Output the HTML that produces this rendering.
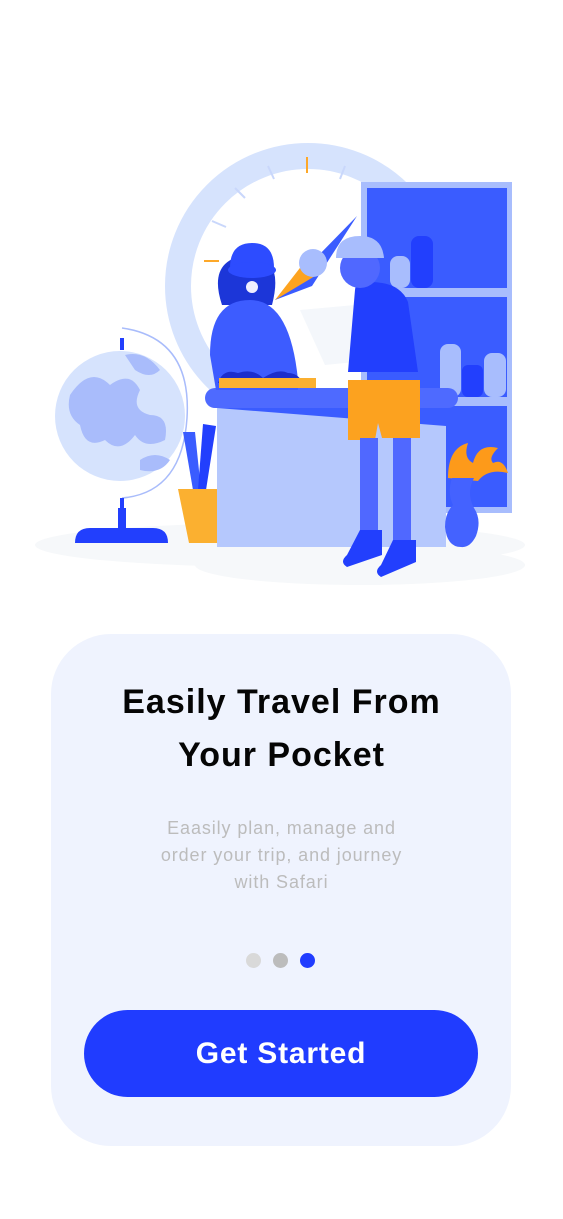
<!DOCTYPE html>
<html><head><meta charset="utf-8"><style>
html,body{margin:0;padding:0;background:#fff;}
body{width:563px;height:1219px;position:relative;overflow:hidden;font-family:"Liberation Sans",sans-serif;}
.card{position:absolute;left:51px;top:634px;width:460px;height:512px;background:#eff3fe;border-radius:60px;}
.t{position:absolute;left:0;width:563px;text-align:center;font-weight:bold;font-size:34px;color:#050505;letter-spacing:1px;}
.s{position:absolute;left:0;width:563px;text-align:center;font-size:18px;color:#bcbcbc;line-height:27px;top:815px;letter-spacing:0.9px;}
.dot{position:absolute;top:953px;width:15px;height:15px;border-radius:50%;}
.btn{position:absolute;left:84px;top:1010px;width:394px;height:87px;border-radius:44px;background:#203cff;color:#fff;font-weight:bold;font-size:30px;text-align:center;line-height:87px;letter-spacing:0.8px;}
</style></head><body>
<svg width="563" height="600" style="position:absolute;left:0;top:0">
<ellipse cx="280" cy="545" rx="245" ry="22" fill="#f6f8fa"/>
<ellipse cx="360" cy="565" rx="165" ry="20" fill="#f6f8fa"/>
<circle cx="308" cy="286" r="130" fill="none" stroke="#d6e3fd" stroke-width="26"/>
<line x1="307" y1="157" x2="307" y2="173" stroke="#fda829" stroke-width="2"/>
<line x1="268" y1="166" x2="274" y2="179" stroke="#c9d7fb" stroke-width="2"/>
<line x1="345" y1="166" x2="340" y2="179" stroke="#c9d7fb" stroke-width="2"/>
<line x1="235" y1="188" x2="245" y2="198" stroke="#c9d7fb" stroke-width="2"/>
<line x1="212" y1="221" x2="226" y2="227" stroke="#c9d7fb" stroke-width="2"/>
<line x1="204" y1="261" x2="219" y2="261" stroke="#fda829" stroke-width="2"/>
<rect x="361" y="182" width="151" height="331" fill="#a8bdfd"/>
<rect x="367" y="188" width="140" height="100" fill="#3a5cff"/>
<rect x="367" y="297" width="140" height="100" fill="#3a5cff"/>
<rect x="367" y="406" width="140" height="101" fill="#3a5cff"/>
<rect x="411" y="236" width="22" height="52" rx="8" fill="#223ffd"/>
<rect x="390" y="256" width="20" height="32" rx="8" fill="#a8bdfd"/>
<rect x="440" y="344" width="21" height="53" rx="8" fill="#a8bdfd"/>
<rect x="484" y="353" width="22" height="44" rx="8" fill="#a8bdfd"/>
<rect x="462" y="365" width="21" height="32" rx="6" fill="#223ffd"/>
<circle cx="120" cy="416" r="65" fill="#d6e3fd"/>
<path d="M70 395 q20 -30 40 -10 q20 -15 30 5 q-10 20 10 25 q20 0 15 25 q-20 10 -30 -5 q-15 20 -30 5 q-20 10 -25 -15 q-15 -10 -10 -30z" fill="#a9bcfb"/>
<path d="M125 355 q20 -5 35 15 q-10 10 -25 0z M140 460 q15 -10 30 0 q-10 15 -30 10z" fill="#a9bcfb"/>
<path d="M122 328 q70 10 65 90 q-5 75 -65 80" fill="none" stroke="#a9bcfb" stroke-width="1.5"/>
<rect x="120" y="338" width="4" height="12" fill="#223ffd"/>
<rect x="120" y="498" width="4" height="12" fill="#223ffd"/>
<rect x="118" y="508" width="8" height="22" fill="#223ffd"/>
<path d="M75 543 q0 -15 15 -15 h63 q15 0 15 15z" fill="#223ffd"/>
<path d="M183 432 l10 58 h8 l-6 -58z" fill="#3a5cff"/>
<path d="M203 424 l-5 66 h8 l10 -64z" fill="#223ffd"/>
<path d="M178 489 h39 v54 h-28z" fill="#fbb030"/>
<rect x="217" y="400" width="229" height="147" fill="#b5c8fd"/>
<rect x="205" y="388" width="253" height="20" rx="10" fill="#4e6aff"/>
<path d="M217 408 h229 v18z" fill="#3a5cff"/>
<path d="M275 300 l82 -84 l-45 70z" fill="#3a5cff"/>
<path d="M275 300 l35 -45 l10 18z" fill="#fda31f"/>
<circle cx="313" cy="263" r="14" fill="#a8bdfd"/>
<path d="M222 305 q-15 -45 25 -50 q38 0 25 50z" fill="#1c36d8"/>
<path d="M230 268 q0 -25 22 -25 q22 0 22 25z" fill="#2d4cff"/>
<ellipse cx="252" cy="270" rx="24" ry="8" fill="#2d4cff"/>
<path d="M210 355 q0 -55 40 -55 q40 0 48 80 v10 h-82z" fill="#3d5cff"/>
<circle cx="252" cy="287" r="6" fill="#eef" />
<path d="M218 383 q5 -15 20 -10 q15 -5 25 5 q15 -10 25 -5 q10 0 15 10z" fill="#1c2ecc"/>
<rect x="219" y="378" width="97" height="10" fill="#fbb030"/>
<path d="M300 310 l55 -5 l20 55 l-50 5z" fill="#f4f7fb"/>
<path d="M355 290 q0 -8 15 -8 q30 0 38 20 l10 70 h-70z" fill="#223ffd"/>
<circle cx="360" cy="268" r="20" fill="#5068ff"/>
<path d="M336 258 q0 -22 24 -22 q22 0 24 22z" fill="#a8bdfd"/>
<path d="M348 380 h72 l0 58 h-38 l-4 -15 l-3 17 h-27z" fill="#fca21f"/>
<rect x="360" y="438" width="18" height="95" fill="#5068ff"/>
<rect x="393" y="438" width="18" height="105" fill="#5068ff"/>
<path d="M360 530 h22 v25 l-35 12 q-8 -5 0 -12z" fill="#223ffd"/>
<path d="M393 540 h23 v22 l-35 15 q-8 -5 0 -12z" fill="#223ffd"/>
<path d="M448 478 q0 -30 20 -35 q-5 15 5 20 q5 -20 25 -15 q-10 10 -5 15 q10 -5 15 10 q-20 -5 -30 8z" fill="#fd9a1a"/>
<path d="M452 478 h22 q-8 15 0 30 q8 12 2 28 q-6 12 -15 11 q-14 0 -16 -20 q0 -14 8 -22 q-6 -12 -1 -27z" fill="#4462ff"/>
</svg>
<div class="card"></div>
<div class="t" style="top:683px;">Easily Travel From</div>
<div class="t" style="top:736px;">Your Pocket</div>
<div class="s">Eaasily plan, manage and<br>order your trip, and journey<br>with Safari</div>
<div class="dot" style="left:246px;background:#d9d9d9"></div>
<div class="dot" style="left:273px;background:#bcbcbc"></div>
<div class="dot" style="left:300px;background:#203cff"></div>
<div class="btn">Get Started</div>
</body></html>
